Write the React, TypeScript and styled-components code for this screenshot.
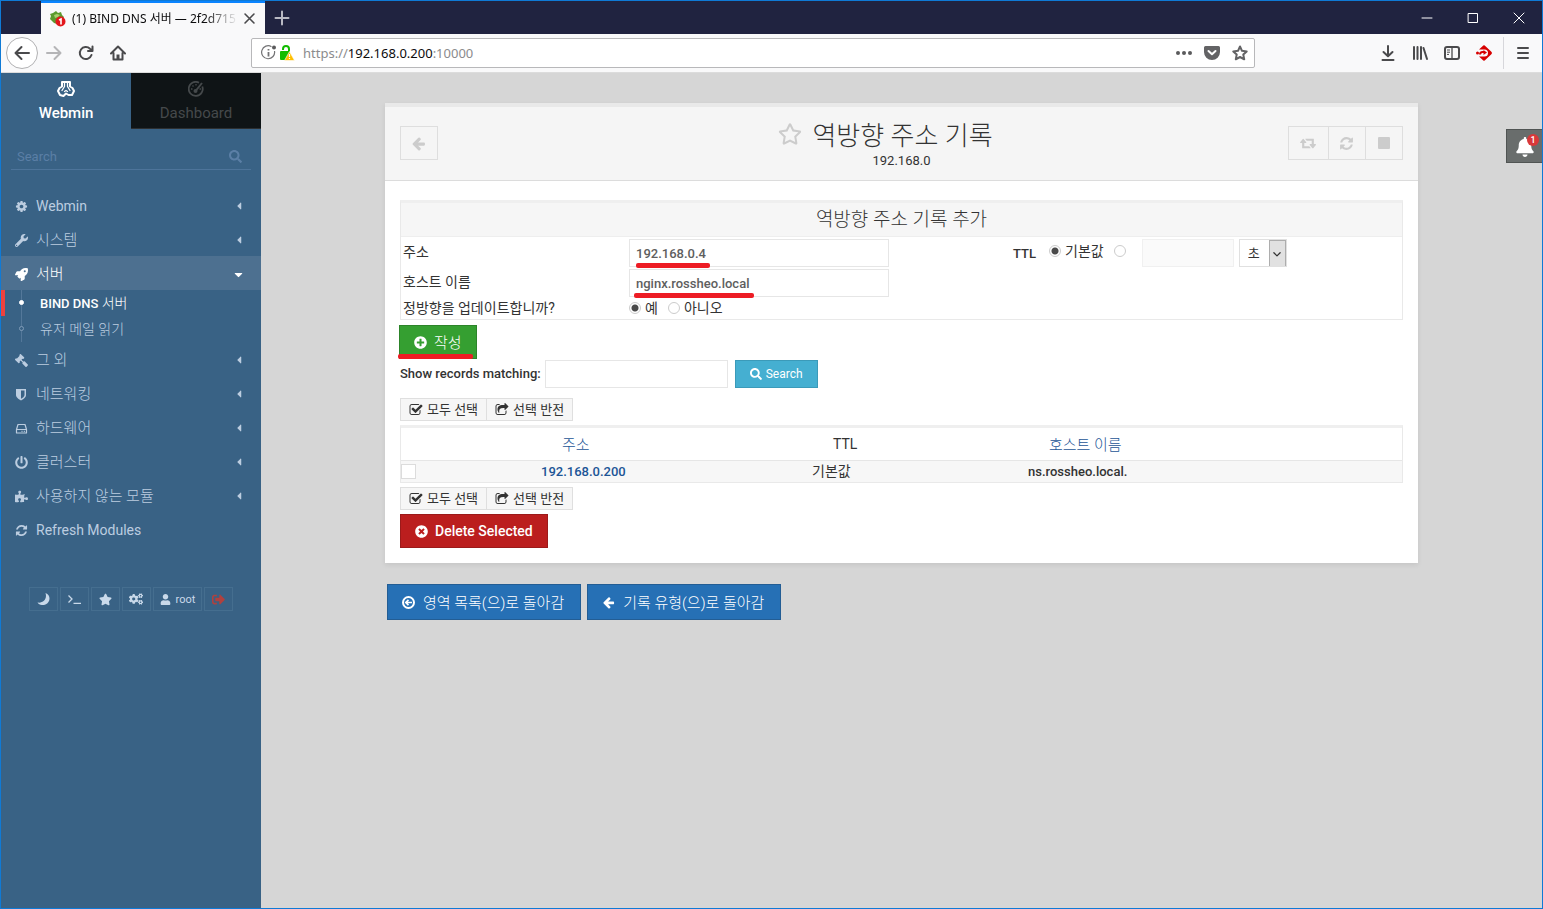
import React from 'react';
import styled, { createGlobalStyle, css } from 'styled-components';
import {
  FaBell, FaCaretDown, FaCaretLeft, FaCogs, FaGavel, FaPlusCircle, FaPowerOff,
  FaPuzzlePiece, FaRegStar, FaRocket, FaSearch,
  FaStar, FaTimesCircle, FaUser, FaWrench, FaSignOutAlt,
} from 'react-icons/fa';

const ui = `Roboto, "Noto Sans CJK KR", sans-serif`;
const chrome = `"Noto Sans", "Noto Sans CJK KR", sans-serif`;

const GlobalStyle = createGlobalStyle`
  *, *::before, *::after { box-sizing: border-box; }
  body { margin: 0; background: #d6d6d6; font-family: ${ui}; font-size: 13px; color: #333; }
  button, input, select { font: inherit; color: inherit; margin: 0; }
  button { cursor: pointer; }
  a { color: inherit; text-decoration: none; }
  h1, h2, p, ul { margin: 0; padding: 0; font-weight: 400; }
  svg { display: block; flex: none; }
`;

/* ---------- browser window ---------- */

const Window = styled.div`
  display: flex;
  flex-direction: column;
  min-height: 100vh;
  border: 1px solid #0f7ad6;
`;

const TitleBar = styled.div`
  display: flex;
  align-items: stretch;
  height: 33px;
  padding-left: 40px;
  background: #202340;
  font-family: ${chrome};
`;

const BrowserTab = styled.div`
  display: flex;
  align-items: center;
  width: 224px;
  padding: 0 8px 0 9px;
  background: #f9f9fa;
  border-top: 2px solid #0a84ff;
  font-size: 12px;
  color: #0c0c0d;
`;

const TabTitle = styled.span`
  flex: 1;
  margin: 0 3px 0 6px;
  padding-bottom: 2px;
  overflow: hidden;
  white-space: nowrap;
  mask-image: linear-gradient(to right, #000 80%, transparent);
`;

const BareButton = styled.button<{ $width?: number }>`
  display: flex;
  align-items: center;
  justify-content: center;
  width: ${(p) => p.$width ?? 32}px;
  padding: 0;
  border: 0;
  background: none;
`;

const WindowButtons = styled.div`
  display: flex;
  margin-left: auto;
`;

const NavBar = styled.div`
  display: flex;
  align-items: center;
  height: 39px;
  padding: 0 3px 0 5px;
  background: #f9f9fa;
  border-bottom: 1px solid #dcdcdc;
  color: #4a4a4c;
`;

const BackButton = styled(BareButton)`
  height: 32px;
  border: 1px solid #b1b1b3;
  border-radius: 50%;
  background: #fff;
`;

const AddressBar = styled.div`
  display: flex;
  align-items: center;
  flex: 1;
  height: 30px;
  margin: 0 117px;
  padding: 0 0 0 9px;
  border: 1px solid #b8b8ba;
  border-radius: 2px;
  background: #fff;
  font-family: ${chrome};
  font-size: 13px;
  color: #8b8b8d;
`;

const Url = styled.span`
  flex: 1;
  margin-left: 8px;
  b { font-weight: 400; color: #0c0c0d; }
`;

const NavDivider = styled.span`
  width: 1px;
  height: 32px;
  margin: 0 3px;
  background: #d7d7db;
`;

/* ---------- sidebar ---------- */

const Page = styled.div`
  display: flex;
  flex: 1;
`;

const Sidebar = styled.nav`
  flex: none;
  width: 260px;
  background: #396285;
  color: #bccde0;
`;

const ModeTabs = styled.div`
  display: grid;
  grid-template-columns: 1fr 1fr;
  height: 56px;
`;

const ModeTab = styled.a<{ $active?: boolean }>`
  display: flex;
  flex-direction: column;
  align-items: center;
  gap: 6px;
  padding-top: 8px;
  font-size: 15px;
  line-height: 20px;
  font-weight: 500;
  color: #fff;
  ${(p) => !p.$active && css`
    background: #0f1416;
    border-bottom: 1px solid #2c2f31;
    color: #45494b;
    font-weight: 400;
  `}
`;

const SideSearch = styled.label`
  display: flex;
  align-items: center;
  height: 26px;
  margin: 15px 10px 18px;
  padding: 0 9px 0 6px;
  border-bottom: 1px solid #4d749a;
  color: #5b7fa6;
  input {
    flex: 1;
    min-width: 0;
    padding: 0;
    border: 0;
    outline: 0;
    background: none;
    font-size: 13px;
  }
  input::placeholder { color: #5b7fa6; opacity: 1; }
`;

const Menu = styled.ul`
  list-style: none;
`;

const MenuLink = styled.a<{ $open?: boolean }>`
  display: flex;
  align-items: center;
  height: 34px;
  padding: 2px 16px 0 14px;
  ${(p) => p.$open && css`background: #4d7090; color: #fff;`}
  > svg:first-child { width: 13px; height: 13px; margin-right: 8px; }
`;

const MenuText = styled.span<{ $latin?: boolean }>`
  flex: 1;
  font-size: 15px;
  font-weight: 300;
  padding-bottom: 3px;
  ${(p) => p.$latin && css`
    padding-bottom: 0;
    font-size: 14px;
    font-weight: 400;
  `}
`;

const SubMenu = styled.ul`
  position: relative;
  list-style: none;
  &::before {
    content: '';
    position: absolute;
    left: 20px;
    top: 0;
    bottom: 0;
    width: 1px;
    background: #54789a;
  }
`;

const SubLink = styled.a<{ $current?: boolean }>`
  display: flex;
  align-items: center;
  height: 26px;
  padding: 0 0 2px 14px;
  border-left: 4px solid ${(p) => (p.$current ? '#ee413d' : 'transparent')};
  font-size: 14px;
  font-weight: 300;
  ${(p) => p.$current && css`color: #fff; font-size: 13px; font-weight: 500;`}
  b { font-size: 14px; font-weight: 300; }
`;

const Dot = styled.span<{ $filled?: boolean }>`
  position: relative;
  width: 5px;
  height: 5px;
  margin-right: 16px;
  border: 1px solid ${(p) => (p.$filled ? '#fff' : '#7f9cb8')};
  border-radius: 50%;
  background: ${(p) => (p.$filled ? '#fff' : '#396285')};
`;

const QuickBar = styled.div`
  display: flex;
  justify-content: center;
  gap: 2px;
  margin-top: 41px;
`;

const QuickButton = styled.button<{ $danger?: boolean }>`
  display: flex;
  align-items: center;
  justify-content: center;
  gap: 5px;
  height: 24px;
  min-width: 29px;
  padding: 0 6px;
  border: 1px solid #456e8f;
  background: none;
  font-size: 11px;
  color: ${(p) => (p.$danger ? '#b0413f' : '#c9d9ea')};
`;

/* ---------- content ---------- */

const Main = styled.main`
  position: relative;
  flex: 1;
  min-width: 0;
  padding: 30px 124px;
`;

const Notifications = styled.button`
  position: absolute;
  top: 56px;
  right: 0;
  display: flex;
  align-items: center;
  justify-content: center;
  width: 36px;
  height: 34px;
  padding: 2px 0 0;
  border: 1px solid #505453;
  border-right: 0;
  background: #696d6c;
  color: #fff;
`;

const Badge = styled.span`
  position: absolute;
  top: 4px;
  right: 3px;
  width: 12px;
  height: 12px;
  border-radius: 50%;
  background: #d9383a;
  font-size: 9px;
  line-height: 12px;
  font-weight: 500;
`;

const Card = styled.section`
  background: #fff;
  box-shadow: 0 2px 5px rgba(0, 0, 0, 0.08);
`;

const CardHeader = styled.header`
  display: grid;
  grid-template-columns: 1fr auto 1fr;
  align-items: center;
  height: 78px;
  padding: 0 15px;
  border-top: 4px solid #e9e9e9;
  border-bottom: 1px solid #dcdcdc;
  background: #f5f5f5;
`;

const ToolGroup = styled.div<{ $end?: boolean }>`
  display: flex;
  padding-bottom: 1px;
  justify-self: ${(p) => (p.$end ? 'end' : 'start')};
`;

const ToolButton = styled.button<{ $wide?: boolean }>`
  display: flex;
  align-items: center;
  justify-content: center;
  width: ${(p) => (p.$wide ? 41 : 38)}px;
  height: 34px;
  padding: 0 1px 0 0;
  border: 1px solid #dedede;
  background: none;
  color: #ccc;
  & + & { margin-left: -1px; }
`;

const TitleBlock = styled.div`
  padding-top: 5px;
  text-align: center;
`;

const Title = styled.h1`
  display: flex;
  align-items: center;
  gap: 10px;
  margin-right: 32px;
  font-size: 26px;
  line-height: 30px;
  font-weight: 300;
  svg { margin-bottom: 5px; color: #ccc; }
`;

const Subtitle = styled.p`
  font-size: 13px;
  line-height: 20px;
`;

const CardBody = styled.div`
  padding: 19px 15px 15px;
`;

const FormPanel = styled.form`
  border: 1px solid #e9e9e9;
  border-top: 3px solid #efefef;
`;

const PanelTitle = styled.h2`
  height: 34px;
  border-bottom: 1px solid #eee;
  background: #f6f6f6;
  font-size: 19px;
  line-height: 34px;
  font-weight: 300;
  text-align: center;
`;

const Fields = styled.div`
  display: grid;
  grid-template-columns: 228fr 384fr 389fr;
  row-gap: 2px;
  padding: 2px 0 0;
`;

const FieldLabel = styled.label`
  grid-column: 1;
  display: flex;
  align-items: center;
  padding: 0 0 2px 2px;
  font-size: 14px;
  line-height: 18px;
`;

const FieldCell = styled.div`
  position: relative;
  grid-column: 2;
  display: flex;
  align-items: center;
`;

const Choice = styled.label`
  display: flex;
  align-items: center;
  gap: 4px;
  height: 18px;
  margin: 0 10px 2px 0;
  font-size: 14px;
  line-height: 18px;
`;

const TtlCell = styled.div`
  grid-column: 3;
  grid-row: 1;
  display: flex;
  align-items: center;
  ${Choice} { margin-bottom: 4px; }
`;

const TtlLabel = styled.span`
  width: 36px;
  font-weight: 500;
`;

const TextInput = styled.input<{ $width: number }>`
  width: ${(p) => p.$width}px;
  height: 28px;
  padding: 0 6px;
  border: 1px solid #e6e6e6;
  border-radius: 0;
  outline: 0;
  background: #fff;
  font-weight: 500;
  color: #5e5e5e;
  &:disabled { margin-left: 6px; background: #fafafa; border-color: #f0f0f0; }
`;

const Radio = styled.input.attrs({ type: 'radio' })`
  appearance: none;
  flex: none;
  width: 12px;
  height: 12px;
  border: 1px solid #ccc;
  border-radius: 50%;
  background: #fff;
  &:checked { background: radial-gradient(circle, #4a4a4a 3px, #fff 4px); }
`;

const SelectWrap = styled.span`
  position: relative;
  width: 48px;
  height: 28px;
  margin-left: 5px;
  select {
    appearance: none;
    width: 100%;
    height: 100%;
    padding: 0 0 0 8px;
    border: 1px solid #e0e0e0;
    border-radius: 0;
    outline: 0;
    background: #fff;
  }
`;

const SelectArrow = styled.span`
  position: absolute;
  top: 1px;
  right: 1px;
  bottom: 1px;
  display: flex;
  align-items: center;
  justify-content: center;
  width: 17px;
  border: 1px solid #adadad;
  border-bottom: 0;
  background: #e1e1e1;
  pointer-events: none;
`;

const marks = {
  address: css`left: 7px; width: 74px;`,
  host: css`left: 5px; width: 120px;`,
  create: css`left: -2px; width: 75px;`,
};

const Underline = styled.span<{ $on: keyof typeof marks }>`
  position: absolute;
  bottom: -1px;
  height: 5px;
  border-radius: 2px;
  background: #ed1c24;
  ${(p) => marks[p.$on]}
`;

const Hangul = styled.span`
  padding-bottom: 2px;
`;

const tones = {
  green: css`background: #359f31; border-color: #2c8429;`,
  red: css`background: #bb1e1e; border-color: #9c1a1a;`,
  blue: css`background: #2670b5; border-color: #235d94;`,
  cyan: css`background: #45afd1; border-color: #3b9ab9;`,
};

const sizes = {
  small: css`gap: 4px; height: 28px; font-size: 12px; font-weight: 400;`,
  medium: css`gap: 7px; height: 34px; font-size: 15px; font-weight: 300;`,
  large: css`gap: 8px; height: 36px; padding-right: 16px; font-size: 15px; font-weight: 300;`,
};

const ActionButton = styled.button<{ $tone: keyof typeof tones; $size?: keyof typeof sizes }>`
  position: relative;
  display: flex;
  align-items: center;
  padding: 0 14px;
  border: 1px solid;
  border-radius: 0;
  color: #fff;
  white-space: nowrap;
  ${(p) => sizes[p.$size ?? 'medium']}
  ${(p) => tones[p.$tone]}
`;

const Latin = styled.span`
  font-size: 14px;
  font-weight: 500;
`;

const CreateRow = styled.div`
  display: flex;
  margin: 5px 0 1px -1px;
`;

const SearchRow = styled.form`
  display: flex;
  align-items: center;
  margin-bottom: 10px;
  label { margin-right: 4px; padding-bottom: 2px; font-weight: 500; }
  button { margin-left: 7px; }
`;

const SelectionButtons = styled.div`
  display: flex;
  margin-bottom: 4px;
`;

const SmallButton = styled.button`
  display: flex;
  align-items: center;
  gap: 4px;
  height: 23px;
  padding: 0 8px;
  border: 1px solid #dfdfdf;
  background: #f6f6f6;
  font-size: 13px;
  & + & { margin-left: -1px; }
`;

const Records = styled.table`
  width: 100%;
  margin: 4px 0;
  border: 1px solid #e9e9e9;
  border-top: 3px solid #efefef;
  border-spacing: 0;
  table-layout: fixed;
  th, td { padding: 0; text-align: left; }
  th {
    height: 32px;
    padding: 0 0 2px 21px;
    font-size: 15px;
    font-weight: 300;
    &.latin { padding-bottom: 0; font-size: 14px; font-weight: 400; }
  }
  td {
    height: 22px;
    border-top: 1px solid #e6e6e6;
    background: #f7f7f7;
    font-weight: 500;
    &.korean { padding-bottom: 2px; font-size: 14px; line-height: 18px; font-weight: 400; }
  }
  a { color: #1c5596; }
`;

const RowCheck = styled.input.attrs({ type: 'checkbox' })`
  appearance: none;
  display: block;
  width: 15px;
  height: 15px;
  border: 1px solid #dcdcdc;
  background: #fff;
`;

const FooterButtons = styled.div`
  display: flex;
  gap: 6px;
  margin: 21px 2px 0;
`;

/* ---------- drawings ---------- */

const Line = ({ d, size = 16, width = 2, color = 'currentColor' }: { d: string; size?: number; width?: number; color?: string }) => (
  <svg width={size} height={size} viewBox="0 0 16 16" fill="none" stroke={color} strokeWidth={width} strokeLinecap="round" strokeLinejoin="round">
    <path d={d} />
  </svg>
);

const Glyph = ({ d, size = 15, box = 1792 }: { d: string; size?: number; box?: number }) => (
  <svg width={size} height={size} viewBox={`0 0 ${box} 1792`} fill="currentColor"><path d={d} /></svg>
);

const ARROW = 'M1664 896v128q0 53-32.5 90.5t-84.5 37.5h-704l293 294q38 36 38 90t-38 90l-75 76q-37 37-90 37-52 0-91-37l-651-652q-37-37-37-90 0-52 37-91l651-650q38-38 91-38 52 0 90 38l75 74q38 38 38 91t-38 91l-293 293h704q52 0 84.5 37.5t32.5 90.5z';
const REFRESH = 'M1639 1056q0 5-1 7-64 268-268 434.5t-478 166.5q-146 0-282.5-55t-243.5-157l-129 129q-19 19-45 19t-45-19-19-45v-448q0-26 19-45t45-19h448q26 0 45 19t19 45-19 45l-137 137q71 66 161 102t187 36q134 0 250-65t186-179q11-17 53-117 8-23 30-23h192q13 0 22.5 9.5t9.5 22.5zm25-800v448q0 26-19 45t-45 19h-448q-26 0-45-19t-19-45 19-45l138-138q-148-137-349-137-134 0-250 65t-186 179q-11 17-53 117-8 23-30 23h-199q-13 0-22.5-9.5t-9.5-22.5v-7q65-268 270-434.5t480-166.5q146 0 284 55.5t245 156.5l130-129q19-19 45-19t45 19 19 45z';
const RETWEET = 'M1280 1504q0 13-9.5 22.5t-22.5 9.5h-960q-8 0-13.5-2t-9-7-5.5-8-3-11.5-1-11.5v-600h-192q-26 0-45-19t-19-45q0-24 15-41l320-384q19-22 49-22t49 22l320 384q15 17 15 41 0 26-19 45t-45 19h-192v384h576q16 0 25 11l160 192q7 10 7 21zm640-416q0 24-15 41l-320 384q-20 23-49 23t-49-23l-320-384q-15-17-15-41 0-26 19-45t45-19h192v-384h-576q-16 0-25-12l-160-192q-7-9-7-20 0-13 9.5-22.5t22.5-9.5h960q8 0 13.5 2t9 7 5.5 8 3 11.5 1 11.5v600h192q26 0 45 19t19 45z';
const CHECK = 'M1472 930v318q0 119-84.5 203.5t-203.5 84.5h-832q-119 0-203.5-84.5t-84.5-203.5v-832q0-119 84.5-203.5t203.5-84.5h832q63 0 117 25 15 7 18 23 3 17-9 29l-49 49q-10 10-23 10-3 0-9-2-23-6-45-6h-832q-66 0-113 47t-47 113v832q0 66 47 113t113 47h832q66 0 113-47t47-113v-254q0-13 9-22l64-64q10-10 23-10 6 0 12 3 20 8 20 29zm231-489l-814 814q-24 24-57 24t-57-24l-430-430q-24-24-24-57t24-57l110-110q24-24 57-24t57 24l263 263 647-647q24-24 57-24t57 24l110 110q24 24 24 57t-24 57z';
const SHARE = 'M1472 989v259q0 119-84.5 203.5t-203.5 84.5h-832q-119 0-203.5-84.5t-84.5-203.5v-832q0-119 84.5-203.5t203.5-84.5h255q13 0 22.5 9.5t9.5 22.5q0 27-26 32-77 26-133 60-10 4-16 4h-112q-66 0-113 47t-47 113v832q0 66 47 113t113 47h832q66 0 113-47t47-113v-214q0-19 18-29 28-13 54-37 16-16 35-8 21 9 21 29zm237-496l-384 384q-18 19-45 19-12 0-25-5-39-17-39-59v-192h-160q-323 0-438 131-119 137-74 473 3 23-20 34-8 2-12 2-16 0-26-13-10-14-21-31t-39.5-68.5-49.5-99.5-38.5-114-17.5-122q0-49 3.5-91t14-90 28-88 47-81.5 68.5-74 94.5-61.5 124.5-48.5 159.5-30.5 196.5-11h160v-192q0-42 39-59 13-5 25-5 26 0 45 19l384 384q19 19 19 45t-19 45z';
const COG = 'M1152 896q0-106-75-181t-181-75-181 75-75 181 75 181 181 75 181-75 75-181zm512-109v222q0 12-8 23t-20 13l-185 28q-19 54-39 91 35 50 107 138 10 12 10 25t-9 23q-27 37-99 108t-94 71q-12 0-26-9l-138-108q-44 23-91 38-16 136-29 186-7 28-36 28h-222q-14 0-24.5-8.5t-11.5-21.5l-28-184q-49-16-90-37l-141 107q-10 9-25 9-14 0-25-11-126-114-165-168-7-10-7-23 0-12 8-23 15-21 51-66.5t54-70.5q-27-50-41-99l-183-27q-13-2-21-12.5t-8-23.5v-222q0-12 8-23t19-13l186-28q14-46 39-92-40-57-107-138-10-12-10-24 0-10 9-23 26-36 98.5-107.5t94.5-71.5q13 0 26 10l138 107q44-23 91-38 16-136 29-186 7-28 36-28h222q14 0 24.5 8.5t11.5 21.5l28 184q49 16 90 37l142-107q9-9 24-9 13 0 25 10 129 119 165 170 7 8 7 22 0 12-8 23-15 21-51 66.5t-54 70.5q26 50 41 98l183 28q13 2 21 12.5t8 23.5z';

const Favicon = () => (
  <svg width="16" height="16" viewBox="0 0 16 16">
    <path d="M6 0l2 2 3-1 1 3 2 2-1 3-2 3-4 1-3-1-2-2-2-2 1-3-1-2 3-1z" fill="#5c9a2e" />
    <path d="M4 4l3-1 3 1-2 2-3 1z" fill="#a8cf6f" />
    <circle cx="10.5" cy="10.5" r="5" fill="#e3161b" />
    <path d="M9 9l2-1v5.500" stroke="#fff" strokeWidth="1.600" fill="none" />
  </svg>
);

const InfoIcon = () => (
  <svg width="16" height="16" viewBox="0 0 16 16" fill="none" stroke="#737375">
    <path d="M10.500 1.700A6.500 6.500 0 1 0 13.500 6" strokeWidth="1.200" />
    <circle cx="13" cy="2.500" r="2" fill="#5a5a5c" stroke="none" />
    <path d="M7.500 7v4.500M7.500 4v1.500" strokeWidth="1.800" />
  </svg>
);

const LockIcon = () => (
  <svg width="18" height="16" viewBox="0 0 18 16">
    <path d="M6 5V4a3 3 0 0 1 6 0v4" fill="none" stroke="#12bc00" strokeWidth="2" />
    <rect x="3" y="6" width="10" height="9" rx="1" fill="#12bc00" />
    <path d="M12.500 6.500l5 9h-10z" fill="#ffbf00" stroke="#fff" strokeWidth=".6" />
    <path d="M12.500 9v3M12.500 13v1" stroke="#fff" strokeWidth="1.200" />
  </svg>
);

const PocketIcon = () => (
  <svg width="16" height="16" viewBox="0 0 16 16">
    <path d="M1.500 1h13A1.500 1.500 0 0 1 16 2.500V7A8 8 0 0 1 0 7V2.500A1.500 1.500 0 0 1 1.500 1z" fill="#636365" />
    <path d="M4.500 6L8 9.300 11.500 6" fill="none" stroke="#fff" strokeWidth="2" strokeLinecap="round" strokeLinejoin="round" />
  </svg>
);

const DotsIcon = () => (
  <svg width="16" height="16" viewBox="0 0 16 16" fill="#5a5a5c">
    <circle cx="2" cy="8" r="2" /><circle cx="8" cy="8" r="2" /><circle cx="14" cy="8" r="2" />
  </svg>
);

const HomeIcon = () => (
  <svg width="16" height="16" viewBox="0 0 16 16">
    <path d="M1 8.500L8 1.500l7 7M3.500 8v6.500h9V8" fill="none" stroke="currentColor" strokeWidth="2" strokeLinecap="round" strokeLinejoin="round" />
    <path d="M6.500 14.500V9.500h3v5z" fill="currentColor" />
  </svg>
);

const SidebarIcon = () => (
  <svg width="16" height="16" viewBox="0 0 16 16" fill="none" stroke="currentColor">
    <rect x="1" y="2" width="14" height="12" rx="2" strokeWidth="2" />
    <path d="M8 2v12" strokeWidth="1.300" />
    <path d="M3 5h3M3 7.200h3M3 9.400h2" />
  </svg>
);

const AddonIcon = () => (
  <svg width="16" height="16" viewBox="0 0 16 16">
    <path d="M6.500 1.200a2 2 0 0 1 3 0l5.600 5.300a2 2 0 0 1 0 3L9.500 14.800a2 2 0 0 1-3 0L3 11.500h5.500a3.500 3.500 0 0 0 0-7H3z" fill="#d70000" />
    <path d="M4 9.500c0-2 1-2.500 2.500-2.500H8" fill="none" stroke="#d70000" strokeWidth="2" />
    <path d="M7.500 5l3.500 2.500-3.500 2.500z" fill="#d70000" />
    <circle cx="1.500" cy="8" r="1.500" fill="#d70000" />
  </svg>
);

const WebminIcon = () => (
  <svg width="18" height="16" viewBox="0 0 18 16" fill="none" stroke="currentColor" strokeWidth="2" strokeLinejoin="round" strokeLinecap="round">
    <path d="M5 1h8v4.500l2.500 1.500L17 10l-2 4h-3.500L9 12.500 6.500 15 3 14l-2-4 1.500-3L5 5.500z" />
    <path d="M7.500 1.500v4L5 9.500M10.500 1.500v4l2.500 4M7.500 10.500L9 9.500l1.500 1" strokeWidth="1.300" />
  </svg>
);

const GaugeIcon = () => (
  <svg width="16" height="16" viewBox="0 0 16 16" fill="none" stroke="currentColor">
    <path d="M14.300 5.500A7 7 0 1 1 11 1.700" strokeWidth="1.800" />
    <path d="M3 8h1.500M4.500 4.500l1 1M8 3v1.500M11.500 8H13" strokeWidth="1.300" />
    <path d="M8 9.500L14 2" strokeWidth="2" />
    <circle cx="7.500" cy="10" r="2" fill="currentColor" stroke="none" />
  </svg>
);

const ShieldIcon = () => (
  <svg viewBox="0 0 13 13">
    <path d="M1 1h10v6c0 2.500-3 4.500-5 5.500C4 11.500 1 9.500 1 7z" fill="currentColor" />
    <path d="M6 2.500h3.500V7c0 1.500-2 3-3.500 3.800z" fill="#396285" />
  </svg>
);

const DriveIcon = () => (
  <svg viewBox="0 0 13 13" fill="none" stroke="currentColor" strokeLinejoin="round">
    <path d="M1.500 7.500L3 2.500h7l1.500 5v3.500h-10zM1.500 7.500h10M6.500 9.300h1M8.800 9.300h1" strokeWidth="1.200" />
  </svg>
);

const MoonIcon = () => (
  <svg width="13" height="12" viewBox="0 0 13 12">
    <path d="M8.500 0C14 2 13.500 9 9 11.300 6 12.800 2 12 .5 9.500 6 10.500 10.500 6 8.500 0z" fill="currentColor" />
  </svg>
);

const PromptIcon = () => (
  <svg width="13" height="12" viewBox="0 0 13 12" fill="none" stroke="currentColor" strokeWidth="1.300">
    <path d="M.5 2.500L4 6 .5 9.500M5.500 10.300H13" />
  </svg>
);

const CircleArrowIcon = () => (
  <svg width="13" height="13" viewBox="0 0 13 13" fill="none" stroke="currentColor" strokeWidth="2">
    <circle cx="6.5" cy="6.5" r="5.5" />
    <path d="M10 6.500H4M6.500 3.800L3.800 6.500l2.700 2.700" strokeWidth="1.700" />
  </svg>
);

const GavelIcon = styled(FaGavel)`
  transform: scaleX(-1);
`;

const BACK = 'M15 8H2M7.500 2L1.500 8l6 6';
const FORWARD = 'M1 8h13M8.500 2l6 6-6 6';

/* ---------- page ---------- */

const menu = [
  { text: 'Webmin', icon: <Glyph d={COG} />, latin: true },
  { text: '시스템', icon: <FaWrench /> },
  { text: '서버', icon: <FaRocket />, open: true },
  { text: '그 외', icon: <GavelIcon /> },
  { text: '네트워킹', icon: <ShieldIcon /> },
  { text: '하드웨어', icon: <DriveIcon /> },
  { text: '클러스터', icon: <FaPowerOff /> },
  { text: '사용하지 않는 모듈', icon: <FaPuzzlePiece /> },
  { text: 'Refresh Modules', icon: <Glyph d={REFRESH} />, latin: true, leaf: true },
];

const SelectionBar = () => (
  <SelectionButtons>
    <SmallButton type="button"><Glyph d={CHECK} size={14} /><Hangul>모두 선택</Hangul></SmallButton>
    <SmallButton type="button"><Glyph d={SHARE} size={14} /><Hangul>선택 반전</Hangul></SmallButton>
  </SelectionButtons>
);

export default function App() {
  return (
    <Window>
      <GlobalStyle />
      <TitleBar>
        <BrowserTab>
          <Favicon />
          <TabTitle>(1) BIND DNS 서버 — 2f2d715</TabTitle>
          <BareButton $width={16} aria-label="Close tab"><Line d="M2.500 2.500l11 11M13.500 2.500l-11 11" size={13} color="#4a4a4c" /></BareButton>
        </BrowserTab>
        <BareButton $width={34} aria-label="New tab"><Line d="M1.500 8h13M8 1.500v13" color="#b9bac4" /></BareButton>
        <WindowButtons>
          <BareButton $width={46} aria-label="Minimize"><Line d="M3 8h10" width={1} color="#fff" /></BareButton>
          <BareButton $width={46} aria-label="Maximize"><Line d="M3.500 3.500h9v9h-9z" width={1} color="#fff" /></BareButton>
          <BareButton $width={46} aria-label="Close"><Line d="M3 3l10 10M13 3L3 13" width={1} color="#fff" /></BareButton>
        </WindowButtons>
      </TitleBar>
      <NavBar>
        <BackButton aria-label="Back"><Line d={BACK} /></BackButton>
        <BareButton aria-label="Forward"><Line d={FORWARD} color="#b5b5b7" /></BareButton>
        <BareButton aria-label="Reload"><Line d="M13.500 10A6 6 0 1 1 12 3.700L14 5.500M14.500 1.500v4.500h-4.500" /></BareButton>
        <BareButton aria-label="Home"><HomeIcon /></BareButton>
        <AddressBar>
          <InfoIcon />
          <LockIcon />
          <Url>https://<b>192.168.0.200</b>:10000</Url>
          <BareButton $width={28} aria-label="Page actions"><DotsIcon /></BareButton>
          <BareButton $width={28} aria-label="Save to Pocket"><PocketIcon /></BareButton>
          <BareButton $width={28} aria-label="Bookmark"><Line d="M8 1.500l2 4.300 4.700.6-3.400 3.200.9 4.700L8 12l-4.200 2.300.9-4.700L1.300 6.400 6 5.800z" color="#636365" /></BareButton>
        </AddressBar>
        <BareButton aria-label="Downloads"><Line d="M8 1v10M3.500 7L8 11.300 12.500 7M2.500 15h11" /></BareButton>
        <BareButton aria-label="Library"><Line d="M2 2v12M5.500 2v12M9 2v12M11.500 3l3.500 11" /></BareButton>
        <BareButton aria-label="Sidebars"><SidebarIcon /></BareButton>
        <BareButton aria-label="Extension"><AddonIcon /></BareButton>
        <NavDivider />
        <BareButton aria-label="Menu"><Line d="M3 3h10M3 8h10M3 13h10" /></BareButton>
      </NavBar>

      <Page>
        <Sidebar>
          <ModeTabs>
            <ModeTab href="#webmin" $active><WebminIcon />Webmin</ModeTab>
            <ModeTab href="#dashboard"><GaugeIcon />Dashboard</ModeTab>
          </ModeTabs>
          <SideSearch>
            <input placeholder="Search" aria-label="Search" />
            <FaSearch size={13} />
          </SideSearch>
          <Menu>
            {menu.map((item) => (
              <li key={item.text}>
                <MenuLink href="#module" $open={item.open}>
                  {item.icon}
                  <MenuText $latin={item.latin}>{item.text}</MenuText>
                  {!item.leaf && (item.open ? <FaCaretDown size={13} /> : <FaCaretLeft size={12} />)}
                </MenuLink>
                {item.open && (
                  <SubMenu>
                    <li><SubLink href="#bind" $current><Dot $filled /><span>BIND DNS <b>서버</b></span></SubLink></li>
                    <li><SubLink href="#mail"><Dot />유저 메일 읽기</SubLink></li>
                  </SubMenu>
                )}
              </li>
            ))}
          </Menu>
          <QuickBar>
            <QuickButton aria-label="Night mode"><MoonIcon /></QuickButton>
            <QuickButton aria-label="Terminal"><PromptIcon /></QuickButton>
            <QuickButton aria-label="Favorites"><FaStar size={13} /></QuickButton>
            <QuickButton aria-label="Theme options"><FaCogs size={14} /></QuickButton>
            <QuickButton><FaUser size={11} />root</QuickButton>
            <QuickButton aria-label="Log out" $danger><FaSignOutAlt size={13} /></QuickButton>
          </QuickBar>
        </Sidebar>

        <Main>
          <Notifications aria-label="Notifications"><FaBell size={20} /><Badge>1</Badge></Notifications>
          <Card>
            <CardHeader>
              <ToolGroup><ToolButton aria-label="Back"><Glyph d={ARROW} /></ToolButton></ToolGroup>
              <TitleBlock>
                <Title><FaRegStar size={24} />역방향 주소 기록</Title>
                <Subtitle>192.168.0</Subtitle>
              </TitleBlock>
              <ToolGroup $end>
                <ToolButton aria-label="Restart" $wide><Glyph d={RETWEET} box={1920} size={16} /></ToolButton>
                <ToolButton aria-label="Refresh"><Glyph d={REFRESH} /></ToolButton>
                <ToolButton aria-label="Stop">
                  <svg width="12" height="12"><rect width="12" height="12" rx="1" fill="currentColor" /></svg>
                </ToolButton>
              </ToolGroup>
            </CardHeader>
            <CardBody>
              <FormPanel>
                <PanelTitle>역방향 주소 기록 추가</PanelTitle>
                <Fields>
                  <FieldLabel htmlFor="address">주소</FieldLabel>
                  <FieldCell>
                    <TextInput id="address" $width={260} defaultValue="192.168.0.4" />
                    <Underline $on="address" />
                  </FieldCell>
                  <TtlCell role="radiogroup" aria-label="TTL">
                    <TtlLabel>TTL</TtlLabel>
                    <Choice><Radio name="ttl" defaultChecked />기본값</Choice>
                    <Choice><Radio name="ttl" aria-label="TTL value" /></Choice>
                    <TextInput $width={92} disabled aria-label="TTL" />
                    <SelectWrap>
                      <select aria-label="Unit"><option>초</option></select>
                      <SelectArrow><Line d="M3 6l5 5 5-5" size={10} /></SelectArrow>
                    </SelectWrap>
                  </TtlCell>
                  <FieldLabel htmlFor="host">호스트 이름</FieldLabel>
                  <FieldCell>
                    <TextInput id="host" $width={260} defaultValue="nginx.rossheo.local" />
                    <Underline $on="host" />
                  </FieldCell>
                  <FieldLabel as="span">정방향을 업데이트합니까?</FieldLabel>
                  <FieldCell role="radiogroup" aria-label="정방향을 업데이트합니까?">
                    <Choice><Radio name="forward" defaultChecked />예</Choice>
                    <Choice><Radio name="forward" />아니오</Choice>
                  </FieldCell>
                </Fields>
              </FormPanel>
              <CreateRow>
                <ActionButton type="button" $tone="green"><FaPlusCircle size={13} /><Hangul>작성</Hangul><Underline $on="create" /></ActionButton>
              </CreateRow>
              <SearchRow>
                <label htmlFor="match">Show records matching:</label>
                <TextInput id="match" $width={183} />
                <ActionButton type="button" $tone="cyan" $size="small"><FaSearch size={12} />Search</ActionButton>
              </SearchRow>
              <SelectionBar />
              <Records>
                <colgroup>
                  <col width="140" /><col width="271" /><col width="216" /><col />
                </colgroup>
                <thead>
                  <tr>
                    <th aria-label="Select" />
                    <th><a href="#address">주소</a></th>
                    <th className="latin">TTL</th>
                    <th><a href="#host">호스트 이름</a></th>
                  </tr>
                </thead>
                <tbody>
                  <tr>
                    <td><RowCheck aria-label="192.168.0.200" /></td>
                    <td><a href="#record">192.168.0.200</a></td>
                    <td className="korean">기본값</td>
                    <td>ns.rossheo.local.</td>
                  </tr>
                </tbody>
              </Records>
              <SelectionBar />
              <ActionButton type="button" $tone="red"><FaTimesCircle size={13} /><Latin>Delete Selected</Latin></ActionButton>
            </CardBody>
          </Card>
          <FooterButtons>
            <ActionButton type="button" $tone="blue" $size="large"><CircleArrowIcon /><Hangul>영역 목록(으)로 돌아감</Hangul></ActionButton>
            <ActionButton type="button" $tone="blue" $size="large"><Glyph d={ARROW} size={13} /><Hangul>기록 유형(으)로 돌아감</Hangul></ActionButton>
          </FooterButtons>
        </Main>
      </Page>
    </Window>
  );
}
